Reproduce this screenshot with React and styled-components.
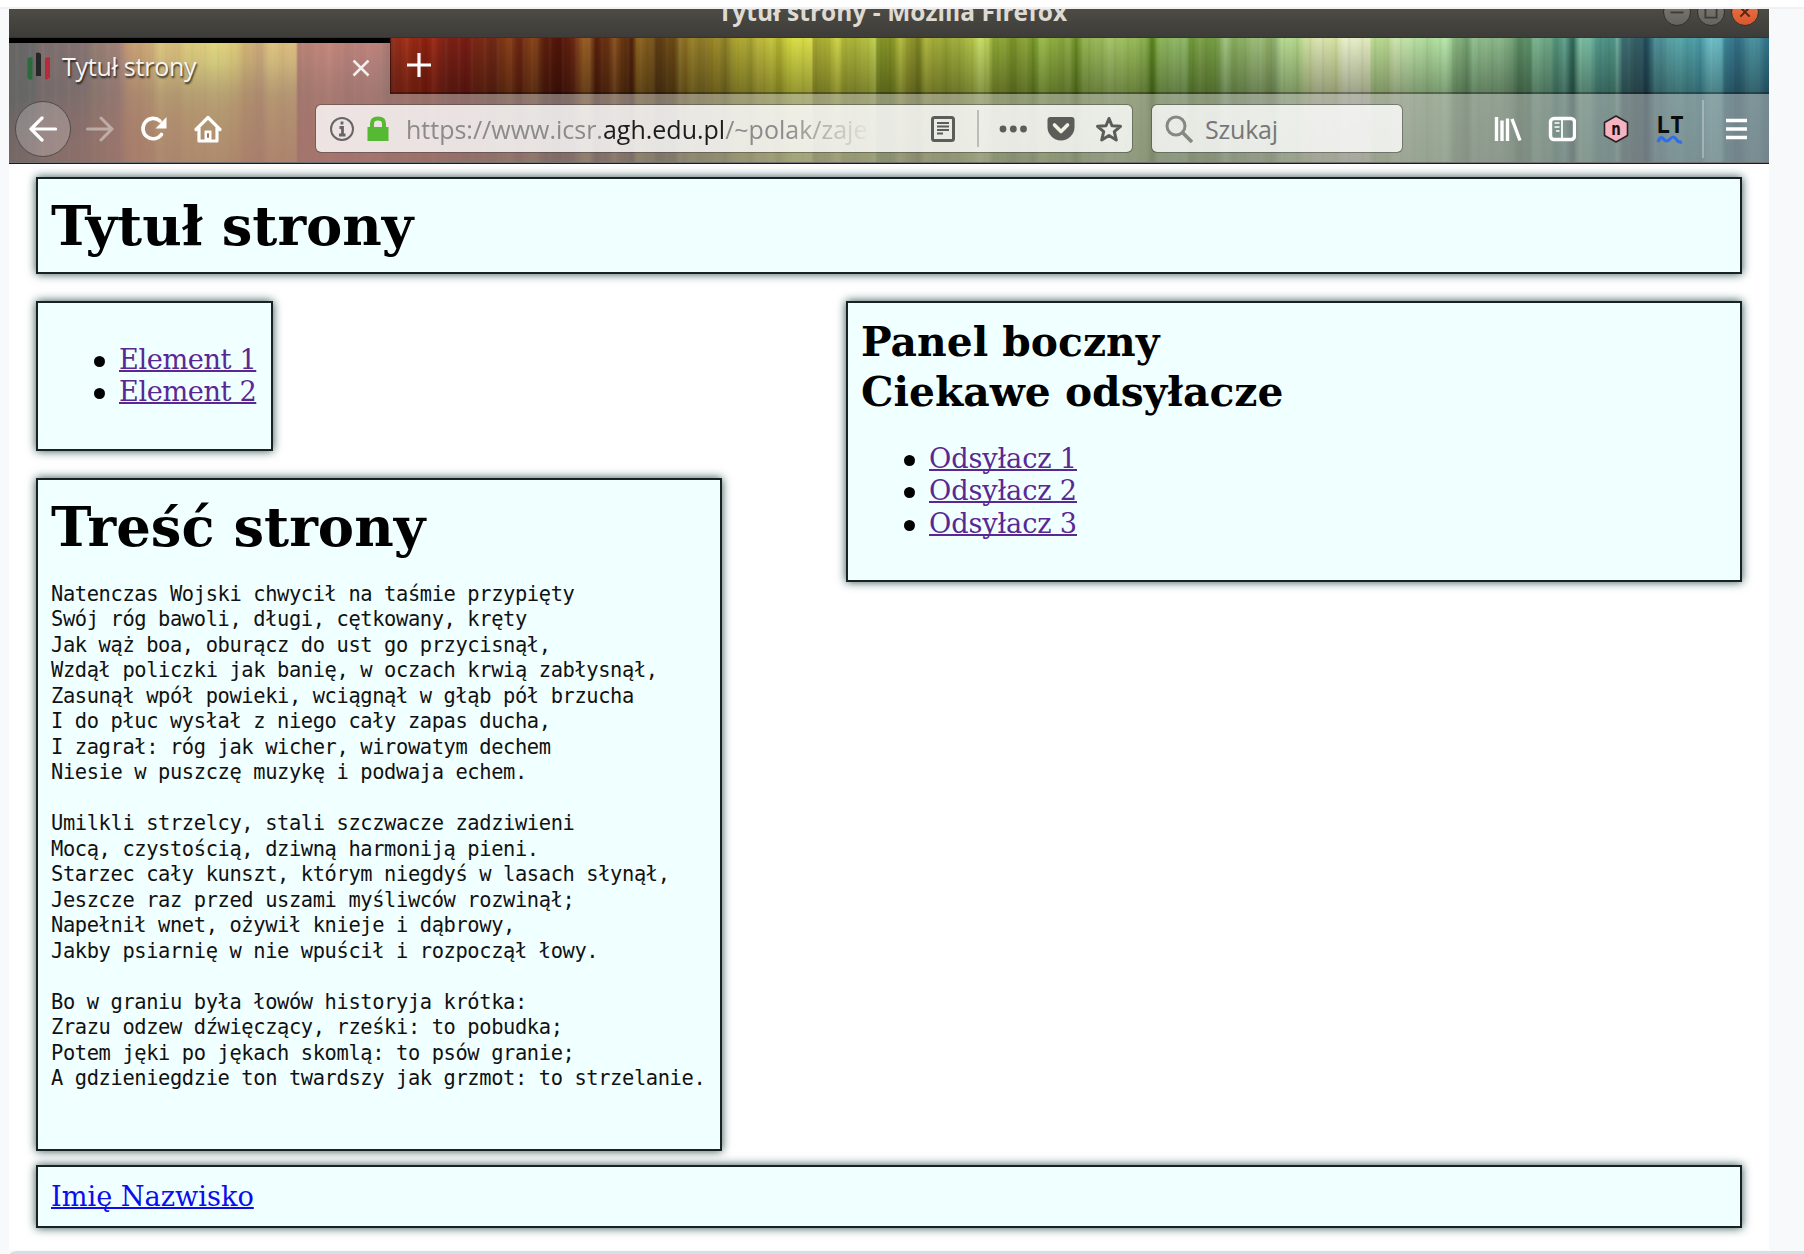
import React from "react";
import styled, { createGlobalStyle, css } from "styled-components";

const WINDOW_LEFT = 9;

const STREAKS = `9 080400,33 0a0a0a,40 301410,85 441c1c,92 583018,120 843c28,127 c86c20,150 d88c20,160 f8c838,175 e8b028,188 f8d430,200 f8d430,215 ffec38,235 f8d028,245 e0a020,262 d08828,270 ffcc38,280 f0b430,296 f8b838,298 a83820,315 b84028,330 c84830,345 ac3828,375 b84030,390 8a2a1c,405 a03018,425 8a2010,435 9a2a18,445 7c2216,467 781c14,478 7a2a14,495 702814,508 8a4018,520 6a2410,532 8c481c,545 5c1e0c,560 501408,575 6c2a14,583 9c6024,590 8c5420,596 58200c,608 6c3412,614 885020,622 6a3812,632 50220c,637 8c641e,652 7c581c,656 5c3c14,675 6e4c14,680 8c742a,685 8c6c20,690 968028,705 8c7828,715 a08c28,725 8c8028,738 b4ac34,750 a4a030,757 bcb43c,772 c4c43c,780 b0b02c,790 d8dc44,812 d8dc48,813 a8a834,825 a8ac30,838 d0d448,845 a8b034,862 b0b83c,875 c0d050,877 8c9c2c,890 7c8c20,900 b4bc40,912 8c9028,918 788020,925 acb43c,945 98a434,965 a4b440,975 b8cc50,980 c8dc6c,988 bcd058,993 88a030,1000 90a838,1015 789028,1025 94ac40,1033 6c8c20,1040 9cbc4c,1060 84a438,1068 90ac48,1076 688c24,1084 94b450,1100 98b858,1110 a4c468,1130 98bc58,1145 8cb050,1152 54801c,1158 88b050,1165 8cb45c,1185 90b868,1190 6c9838,1200 7ca048,1215 70983c,1225 a0c480,1235 84a858,1260 a0c080,1267 8caa60,1275 90b070,1282 b8dc94,1298 b0d488,1305 ccdf9c,1320 dce4b4,1335 d4e0a0,1345 e8f0cc,1370 e0e8bc,1371 bcdc94,1385 b4d48c,1395 ccE4ac,1415 b8e0a4,1430 acd898,1445 b8e8ac,1450 a4d498,1456 84b07c,1468 74a070,1473 90c090,1485 8cb888,1505 88b488,1520 588860,1530 5c9068,1533 7cb490,1550 6ca484,1555 509078,1565 60a08c,1573 2c6454,1580 80c0a4,1590 70b49c,1600 4c9084,1615 509484,1617 70b0a0,1623 3c6c70,1640 345c64,1646 204858,1655 4c8c94,1665 509498,1675 5ca8ac,1685 50a0a4,1700 4898a4,1712 74c4cc,1722 60b0bc,1724 408c9c,1735 306c84,1745 3c7c8c,1752 5098a4,1769 307088`
  .split(",")
  .map((stop) => {
    const [x, hex] = stop.split(" ");
    return `#${hex} ${Number(x) - WINDOW_LEFT}px`;
  })
  .join(", ");

const Global = createGlobalStyle`
  html, body { margin: 0; padding: 0; }
  body { background: #f8f9fb; overflow: hidden; }
  *, *::before, *::after { box-sizing: border-box; }
  svg { display: block; flex: none; }
`;

const Screen = styled.div`
  width: 1804px;
  height: 1254px;
  overflow: hidden;
  display: flex;
  flex-direction: column;
`;

const TopRule = styled.div`
  flex: none;
  height: 9px;
  background: #fff;
  border-bottom: 2px solid #f1f1f2;
`;

const Window = styled.section`
  flex: none;
  width: 1760px;
  height: 1241px;
  margin-left: ${WINDOW_LEFT}px;
  background: #fff;
`;

const BottomBand = styled.div`
  flex: none;
  height: 3px;
  margin: 1px 0 0 10px;
  background: #cfe2e7;
  border-top-left-radius: 8px 3px;
`;

const TitleBar = styled.header`
  height: 29px;
  overflow: hidden;
  display: flex;
  justify-content: center;
  align-items: flex-start;
  background: linear-gradient(#4d4b45, #3d3c38);
  border-bottom: 1px solid #35332e;
`;

const WindowTitle = styled.div`
  flex: 1;
  padding-left: 709px;
  margin-top: -17px;
  font: 700 24.5px/40px "Open Sans", "Noto Sans", sans-serif;
  letter-spacing: 0.05px;
  color: #dfdbd2;
  white-space: nowrap;
`;

const WindowButtons = styled.div`
  display: flex;
  gap: 6px;
  margin: -11px 10px 0 0;
`;

const WindowButton = styled.span`
  width: 28px;
  height: 28px;
  border-radius: 50%;
  border: 1px solid #33312c;
  background: ${(p) => (p.$close ? "linear-gradient(#f0764d, #d9582c)" : "linear-gradient(#7d7b74, #66645e)")};
  color: ${(p) => (p.$close ? "#5a2410" : "#3c3b37")};
`;

const Chrome = styled.div`
  height: 126px;
  border-bottom: 2px solid #1d1b1f;
  background:
    radial-gradient(ellipse 330px 110px at 250px 135px, rgba(150, 30, 10, 0.6), rgba(150, 30, 10, 0.35) 60%, transparent),
    linear-gradient(rgba(0, 0, 0, 0), rgba(0, 0, 0, 0.32) 56px, rgba(0, 0, 0, 0.42) 125px),
    repeating-linear-gradient(90deg, rgba(0, 0, 0, 0.04) 0 2px, transparent 3px 6px, rgba(255, 255, 255, 0.04) 7px 9px, transparent 10px 13px),
    linear-gradient(90deg, ${STREAKS});
`;

const TabStrip = styled.div`
  height: 56px;
  display: flex;
  align-items: flex-start;
`;

const Tab = styled.div`
  width: 381px;
  height: 56px;
  padding: 0 20px 0 18px;
  display: flex;
  align-items: center;
  border-top: 5px solid #000;
  background: rgba(200, 200, 200, 0.5);
  background-clip: padding-box;
`;

const TabTitle = styled.span`
  flex: 1;
  margin: -6px 0 0 11px;
  font: 400 25px/36px "Open Sans", "Noto Sans", sans-serif;
  letter-spacing: -0.25px;
  color: #f7f4f4;
  text-shadow: 1px 2px 2px rgba(0, 0, 0, 0.75);
  white-space: nowrap;
`;

const NewTab = styled.div`
  flex: 1;
  height: 56px;
  padding: 15px 0 0 16px;
  border-left: 1px solid rgba(0, 0, 0, 0.4);
  border-bottom: 2px solid rgba(0, 0, 0, 0.3);
`;

const Toolbar = styled.nav`
  height: 69px;
  padding: 0 22px 0 6px;
  display: flex;
  align-items: center;
  background: rgba(200, 200, 200, 0.5);
`;

const BackButton = styled.span`
  width: 56px;
  height: 56px;
  display: grid;
  place-items: center;
  border-radius: 50%;
  border: 1px solid #4c4c4c;
  background: rgba(255, 255, 255, 0.2);
`;

const NavIcons = styled.div`
  display: flex;
  gap: 26px;
  margin-left: 15px;
`;

const Field = styled.div`
  height: 49px;
  display: flex;
  align-items: center;
  border-radius: 6px;
  border: 1px solid rgba(60, 60, 60, 0.45);
  background: rgba(255, 255, 255, 0.8);
  background-clip: padding-box;
  font: 400 25px/40px "Open Sans", "Noto Sans", sans-serif;
  white-space: nowrap;
`;

const UrlField = styled(Field)`
  width: 818px;
  margin-left: 93px;
  padding: 0 9px 0 12px;
`;

const SearchField = styled(Field)`
  width: 252px;
  margin-left: 18px;
  padding-left: 13px;
  gap: 12px;
  color: #777;
  letter-spacing: -0.2px;
`;

const UrlText = styled.div`
  width: 463px;
  margin-left: 17px;
  color: #8b8b8b;
  letter-spacing: ${(p) => p.$tracking}px;
  mask-image: linear-gradient(90deg, #000 380px, transparent 468px);
`;

const Domain = styled.span`
  color: #1c1c1c;
`;

const UrlActions = styled.div`
  display: flex;
  align-items: center;
  margin-left: auto;
`;

const Divider = styled.span`
  width: 2px;
  height: ${(p) => p.$height}px;
  margin: ${(p) => p.$margin};
  background: ${(p) => p.$color};
`;

const Extensions = styled.div`
  display: flex;
  align-items: center;
  gap: 26px;
  margin-left: auto;
`;

const Content = styled.main`
  padding: 13px 27px 0;
  font: 27.2px/32.3px "DejaVu Serif", serif;
  color: #000;
`;

const Panel = styled.section`
  width: ${(p) => (p.$width ? `${p.$width}px` : "auto")};
  height: ${(p) => p.$height}px;
  padding: 14px 13px;
  border: 2px solid #192222;
  background: #f0ffff;
  box-shadow: 0 0 9px #2f4f4f;
`;

const Columns = styled.div`
  display: flex;
  justify-content: space-between;
  align-items: flex-start;
  margin: 27px 0 14px;
`;

const LeftColumn = styled.div`
  display: flex;
  flex-direction: column;
  gap: 27px;
`;

const heading = css`
  margin: 0;
  font-weight: 700;
  white-space: nowrap;
`;

const Heading = styled.h1`
  ${heading}
  font-size: 54.4px;
  line-height: 67px;
`;

const Subheading = styled.h2`
  ${heading}
  padding-top: 1px;
  font-size: 40.8px;
  line-height: 48.6px;
`;

const LinkList = styled.ul`
  margin: 27px 0;
  padding-left: 43px;
  list-style: none;
`;

const Item = styled.li`
  display: flex;

  &::before {
    content: "";
    width: 11px;
    height: 11px;
    margin: 12px 14px 0 0;
    border-radius: 50%;
    background: #000;
  }
`;

const Link = styled.a`
  color: ${(p) => (p.$visited ? "#5a2893" : "#0c0cec")};
  letter-spacing: ${(p) => p.$tracking ?? -0.4}px;
  text-decoration: underline;
  text-decoration-thickness: 2px;
  text-decoration-skip-ink: none;
  white-space: nowrap;
`;

const Poem = styled.pre`
  margin: 20.5px 0 0;
  font: 20.4px/25.52px "DejaVu Sans Mono", monospace;
  letter-spacing: -0.38px;
  color: #111;
`;

const Svg = ({ children, size = 28, ...rest }) => (
  <svg width={size} height={size} viewBox="0 0 28 28" fill="none" stroke="#fff" strokeWidth="3" {...rest}>
    {children}
  </svg>
);

const FaviconSvg = styled.svg`
  margin-top: -5px;
`;

const Favicon = () => (
  <FaviconSvg width="24" height="30" viewBox="0 0 24 30">
    <path d="M.5 7.500Q3 5.500 5.500 6.500V28Q3 30 .5 27Z" fill="#2a6a3c" />
    <path d="M9 2Q12 .5 14 3V25H9Z" fill="#262626" />
    <path d="M18 7.500Q20 5.500 23 6.500V26Q21 29.500 18 28Z" fill="#b62a3c" />
  </FaviconSvg>
);

const Lock = styled.svg`
  margin-left: 11px;
`;

const poem = `Natenczas Wojski chwycił na taśmie przypięty
Swój róg bawoli, długi, cętkowany, kręty
Jak wąż boa, oburącz do ust go przycisnął,
Wzdął policzki jak banię, w oczach krwią zabłysnął,
Zasunął wpół powieki, wciągnął w głąb pół brzucha
I do płuc wysłał z niego cały zapas ducha,
I zagrał: róg jak wicher, wirowatym dechem
Niesie w puszczę muzykę i podwaja echem.

Umilkli strzelcy, stali szczwacze zadziwieni
Mocą, czystością, dziwną harmoniją pieni.
Starzec cały kunszt, którym niegdyś w lasach słynął,
Jeszcze raz przed uszami myśliwców rozwinął;
Napełnił wnet, ożywił knieje i dąbrowy,
Jakby psiarnię w nie wpuścił i rozpoczął łowy.

Bo w graniu była łowów historyja krótka:
Zrazu odzew dźwięczący, rześki: to pobudka;
Potem jęki po jękach skomlą: to psów granie;
A gdzieniegdzie ton twardszy jak grzmot: to strzelanie.`;

export default function App() {
  return (
    <Screen>
      <Global />
      <TopRule />
      <Window>
        <TitleBar>
          <WindowTitle>Tytuł strony - Mozilla Firefox</WindowTitle>
          <WindowButtons>
            <WindowButton>
              <Svg size={26} stroke="currentColor" strokeWidth="2"><path d="M7 14.500H21" /></Svg>
            </WindowButton>
            <WindowButton>
              <Svg size={26} stroke="currentColor" strokeWidth="2"><path d="M8 8H20V20H8Z" /></Svg>
            </WindowButton>
            <WindowButton $close>
              <Svg size={26} stroke="currentColor" strokeWidth="2.2"><path d="M9 9L19 19M19 9L9 19" /></Svg>
            </WindowButton>
          </WindowButtons>
        </TitleBar>

        <Chrome>
          <TabStrip>
            <Tab>
              <Favicon />
              <TabTitle>Tytuł strony</TabTitle>
              <svg width="18" height="18" viewBox="0 0 18 18" stroke="#f4eeee" strokeWidth="2.600"><path d="M1.500 .5L16.500 15.500M16.500 .5L1.500 15.500" /></svg>
            </Tab>
            <NewTab>
              <svg width="24" height="24" viewBox="0 0 24 24" stroke="#fff" strokeWidth="3.200"><path d="M12 0V24M0 12H24" /></svg>
            </NewTab>
          </TabStrip>

          <Toolbar>
            <BackButton>
              <Svg strokeWidth="3.200" strokeLinecap="round" strokeLinejoin="round"><path d="M26.500 14H2M13 3L2 14L13 25" /></Svg>
            </BackButton>
            <NavIcons>
              <Svg strokeWidth="3" strokeLinecap="round" strokeLinejoin="round" opacity=".4"><path d="M1.500 14H26M15 3L26 14L15 25" /></Svg>
              <Svg strokeWidth="3.600">
                <path d="M21.500 19.500A10.200 10.200 0 1 1 20 6" strokeLinecap="round" />
                <path d="M26.500 2V13.500H15.500Z" fill="#fff" stroke="none" />
              </Svg>
              <Svg strokeWidth="3.200" strokeLinejoin="round" strokeLinecap="round">
                <path d="M2 14.500L14 2.500L26 14.500M5 13V26H23V13" />
                <path d="M10.500 26V15.500H17.500V26Z" fill="#fff" stroke="none" />
                <path d="M14 19V22" stroke="#a07458" strokeWidth="2" />
              </Svg>
            </NavIcons>

            <UrlField>
              <Svg stroke="#666" strokeWidth="2">
                <circle cx="14" cy="14" r="11" />
                <path d="M11.500 12.500H14.500V20M11 20H17.500M14 6.500V9.500" strokeWidth="2.800" />
              </Svg>
              <Lock width="22" height="26" viewBox="0 0 22 26">
                <path d="M.5 11H21.500V25H.5Z" fill="#55b933" />
                <path d="M5 12V8Q5 3 11 3T17 8V12" transform="translate(0 -.5)" fill="none" stroke="#55b933" strokeWidth="4" />
              </Lock>
              <UrlText $tracking={0}>
                https://www.icsr.<Domain>agh.edu.pl</Domain>/~polak/zaje
              </UrlText>
              <UrlActions>
                <Svg stroke="#5c5c58">
                  <rect x="3.500" y="2.500" width="21" height="23" rx="2" />
                  <path d="M8 8H20M8 11.500H20M8 15H20M8 18.500H14" strokeWidth="1.800" />
                </Svg>
                <Divider $height={37} $margin="0 20px 0 20px" $color="#bdbdb8" />
                <Svg stroke="none" fill="#5c5c58">
                  <circle cx="4" cy="14" r="3.400" /><circle cx="14.300" cy="14" r="3.400" /><circle cx="24.500" cy="14" r="3.400" />
                </Svg>
                <Divider $height={1} $margin="0 9px" $color="transparent" />
                <Svg stroke="none" fill="#5c5c58">
                  <path d="M.5 5Q.5 2 3.500 2H24.500Q27.500 2 27.500 5V12A13.500 13.500 0 0 1 .5 12Z" />
                  <path d="M7.500 10L14 16.500L20.500 10" stroke="#f0f2e4" strokeWidth="3.600" fill="none" strokeLinecap="round" strokeLinejoin="round" />
                </Svg>
                <Divider $height={1} $margin="0 9px" $color="transparent" />
                <Svg stroke="#5c5c58" strokeLinejoin="round">
                  <path d="M14 3.500L17 10.800L25.500 11.300L19.300 16.700L21.300 25L14 20.500L6.700 25L8.700 16.700L2.500 11.300L11 10.800Z" />
                </Svg>
              </UrlActions>
            </UrlField>

            <SearchField>
              <Svg stroke="#858a80">
                <circle cx="11" cy="11" r="9" />
                <path d="M17.500 17.500L27 27" strokeWidth="3.600" />
              </Svg>
              Szukaj
            </SearchField>

            <Extensions>
              <Svg stroke="#fff" strokeWidth="3.400">
                <path d="M2.500 2V26M8 5.500V26M13.500 3.500V26M18 4L26 25.500" />
              </Svg>
              <Svg>
                <rect x="2.500" y="3.500" width="24" height="21" rx="3.500" strokeWidth="3.400" />
                <path d="M14 4V25" strokeWidth="1.800" />
                <path d="M6.500 8H11.500M6.500 12H11.500M8 16H11.500" strokeWidth="1.600" />
              </Svg>
              <Svg stroke="#2a2024" strokeWidth="1.600" strokeLinejoin="round">
                <path d="M14 1L25.500 7.500V20.500L14 27L2.500 20.500V7.500Z" fill="#f5b4c0" />
                <text x="14" y="19.500" textAnchor="middle" fill="#1a1014" stroke="none" fontFamily="DejaVu Sans" fontWeight="700" fontSize="18" textLength="9.500" lengthAdjust="spacingAndGlyphs">n</text>
              </Svg>
              <Svg overflow="visible">
                <text x="0" y="17.500" fill="#0c0c0c" stroke="none" fontFamily="DejaVu Sans Mono" fontWeight="700" fontSize="23.500" textLength="28" lengthAdjust="spacingAndGlyphs">LT</text>
                <path d="M2 27Q4.500 20 7.500 24T14 24T20 24T26 27" stroke="#2f6fec" strokeWidth="3.200" />
              </Svg>
            </Extensions>
            <Divider $height={58} $margin="0 22px 0 18px" $color="rgba(220,225,232,.38)" />
            <svg width="21" height="28" viewBox="0 0 21 28" stroke="#fff" strokeWidth="3.400"><path d="M0 5.500H21M0 14H21M0 22.500H21" /></svg>
          </Toolbar>
        </Chrome>

        <Content>
          <Panel $height={97}>
            <Heading>Tytuł strony</Heading>
          </Panel>
          <Columns>
            <LeftColumn>
              <Panel $width={237} $height={150}>
                <LinkList>
                  <Item><Link $visited>Element 1</Link></Item>
                  <Item><Link $visited>Element 2</Link></Item>
                </LinkList>
              </Panel>
              <Panel $width={686} $height={673}>
                <Heading>Treść strony</Heading>
                <Poem>{poem}</Poem>
              </Panel>
            </LeftColumn>
            <Panel $width={896} $height={281}>
              <Subheading>Panel boczny</Subheading>
              <Subheading>Ciekawe odsyłacze</Subheading>
              <LinkList>
                <Item><Link $visited $tracking={-0.15}>Odsyłacz 1</Link></Item>
                <Item><Link $visited $tracking={-0.15}>Odsyłacz 2</Link></Item>
                <Item><Link $visited $tracking={-0.15}>Odsyłacz 3</Link></Item>
              </LinkList>
            </Panel>
          </Columns>
          <Panel as="footer" $height={63}>
            <Link $tracking={-0.02}>Imię Nazwisko</Link>
          </Panel>
        </Content>
      </Window>
      <BottomBand />
    </Screen>
  );
}
